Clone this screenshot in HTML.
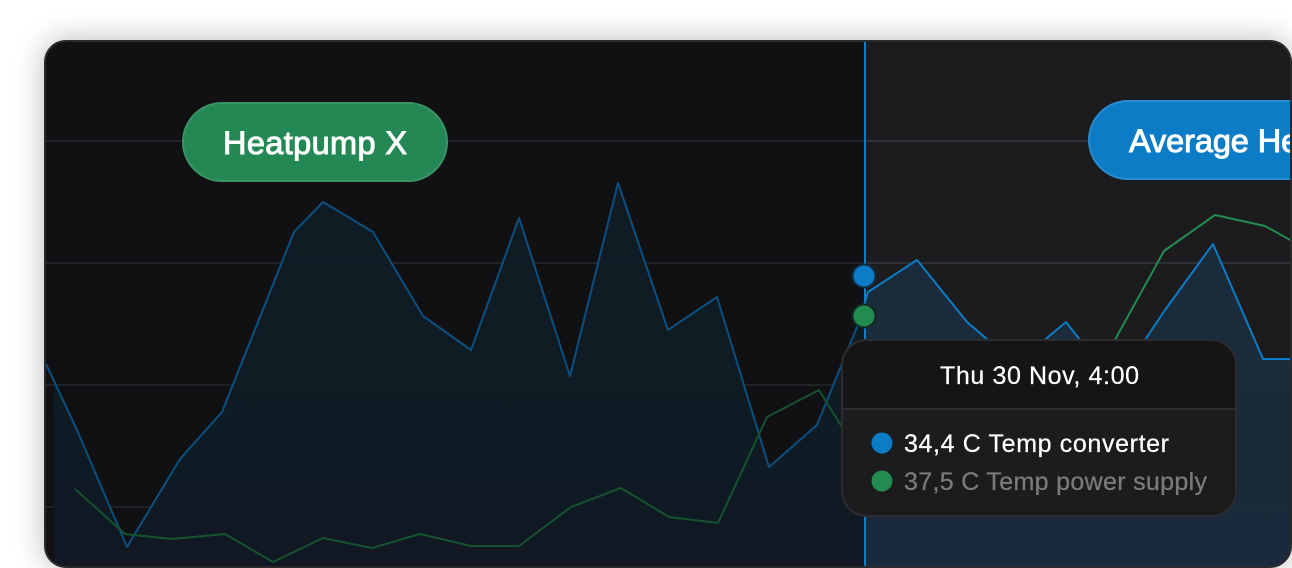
<!DOCTYPE html>
<html lang="en">
<head>
<meta charset="utf-8">
<style>
html,body{margin:0;padding:0;background:#fff;width:1292px;height:568px;overflow:hidden}
.card{position:absolute;left:44px;top:40px;width:1248px;height:528px;box-sizing:border-box;border-radius:22px;background:#2a2a2c;box-shadow:0 0 30px rgba(0,0,0,.28)}
svg{position:absolute;left:0;top:0}
text{font-family:"Liberation Sans",sans-serif}
</style>
</head>
<body>
<div class="card"></div>
<svg width="1292" height="568" viewBox="0 0 1292 568" xmlns="http://www.w3.org/2000/svg">
<defs>
<clipPath id="inner"><rect x="46" y="42" width="1244" height="524" rx="20"/></clipPath>
<clipPath id="left"><rect x="46" y="42" width="818" height="524"/></clipPath>
<clipPath id="right"><rect x="864" y="42" width="426" height="524"/></clipPath>
<linearGradient id="fl" x1="0" y1="180" x2="0" y2="566" gradientUnits="userSpaceOnUse"><stop offset="0" stop-color="#0f1d26"/><stop offset=".75" stop-color="#0f1c25"/><stop offset="1" stop-color="#111824"/></linearGradient>
<linearGradient id="fr" x1="0" y1="240" x2="0" y2="566" gradientUnits="userSpaceOnUse"><stop offset="0" stop-color="#1a2d3e"/><stop offset="1" stop-color="#1a2a3d"/></linearGradient>
</defs>
<g clip-path="url(#inner)">
<rect x="46" y="42" width="818" height="524" fill="#111113"/>
<rect x="864" y="42" width="426" height="524" fill="#1c1c1e"/>
<!-- LEFT -->
<g clip-path="url(#left)">
<g fill="#212225"><rect x="46" y="140" width="818" height="2"/><rect x="46" y="262" width="818" height="2"/><rect x="46" y="384" width="818" height="2"/><rect x="46" y="506" width="818" height="2"/></g>
<polygon fill="url(#fl)" fill-opacity=".93" points="54,381 77,430 127,547 180,459 222,412 294,232 323,202 373,232 423,316 471,350 519,218 570,376 618,183 668,330 717,297 769,467 817,425 857,327 868,292 868,566 54,566"/>
<polyline fill="none" stroke="#0b4f80" stroke-width="2" stroke-linejoin="round" points="46,364 77,430 127,547 180,459 222,412 294,232 323,202 373,232 423,316 471,350 519,218 570,376 618,183 668,330 717,297 769,467 817,425 857,327 868,292"/>
<polyline fill="none" stroke="#14532f" stroke-width="2" stroke-linejoin="round" points="75,489 125,534 172,539 225,534 273,562 323,538 372,548 420,534 471,546 519,546 571,507 621,488 669,517 718,523 767,417 819,390 845,432 870,470"/>
</g>
<!-- RIGHT -->
<g clip-path="url(#right)">
<g fill="#2e3035"><rect x="864" y="140" width="426" height="2"/><rect x="864" y="262" width="426" height="2"/><rect x="864" y="384" width="426" height="2"/><rect x="864" y="506" width="426" height="2"/></g>
<polygon fill="url(#fr)" fill-opacity=".93" points="857,327 868,292 917,260 967,322 1016,364 1066,322 1115,385 1165,310 1213,244 1263,359 1292,359 1292,566 857,566"/>
<polyline fill="none" stroke="#238a50" stroke-width="2" stroke-linejoin="round" points="1090,385 1164,251 1215,215 1265,226 1292,241"/>
<polyline fill="none" stroke="#0c7cc6" stroke-width="2" stroke-linejoin="round" points="857,327 868,292 917,260 967,322 1016,364 1066,322 1115,385 1165,310 1213,244 1263,359 1292,359"/>
</g>
<!-- crosshair -->
<rect x="864" y="42" width="2" height="524" fill="#0c7cc6"/>
<circle cx="864" cy="276" r="11.5" fill="#0c7cc6" stroke="#0d2c44" stroke-width="2"/>
<circle cx="864" cy="316" r="11.5" fill="#238a50" stroke="#0f2c22" stroke-width="2"/>
<!-- pills -->
<rect x="183" y="103" width="264" height="78" rx="39" fill="#248854" stroke="#3a9465" stroke-width="2"/>
<text x="223" y="154" font-size="32.5" fill="#fff" stroke="#fff" stroke-width=".95" textLength="184" lengthAdjust="spacing">Heatpump X</text>
<rect x="1089" y="101" width="260" height="78" rx="39" fill="#0c7cc6" stroke="#2a8ccf" stroke-width="2"/>
<text x="1129" y="152" font-size="32.5" fill="#fff" stroke="#fff" stroke-width=".95" letter-spacing="-.1">Average He</text>
<!-- tooltip -->
<g>
<rect x="842" y="340" width="394" height="176" rx="25" fill="#1c1c1e" stroke="#2d2d2f" stroke-width="2"/>
<path d="M843 408V365a24 24 0 0 1 24-24H1211a24 24 0 0 1 24 24V408Z" fill="#151517"/>
<rect x="842" y="408" width="394" height="2" fill="#2d2d2f"/>
<text x="940" y="384" font-size="25" fill="#fff" stroke="#fff" stroke-width=".25" textLength="199" lengthAdjust="spacing">Thu 30 Nov, 4:00</text>
<circle cx="882" cy="443" r="10.5" fill="#0c7cc6"/>
<circle cx="882" cy="481" r="10.5" fill="#238a50"/>
<text x="904" y="452" font-size="25" fill="#fff" stroke="#fff" stroke-width=".25" textLength="265" lengthAdjust="spacing">34,4 C Temp converter</text>
<text x="904" y="490" font-size="25" fill="#7b7b7d" stroke="#7b7b7d" stroke-width=".25" textLength="303" lengthAdjust="spacing">37,5 C Temp power supply</text>
</g>
</g>
</svg>
</body>
</html>
